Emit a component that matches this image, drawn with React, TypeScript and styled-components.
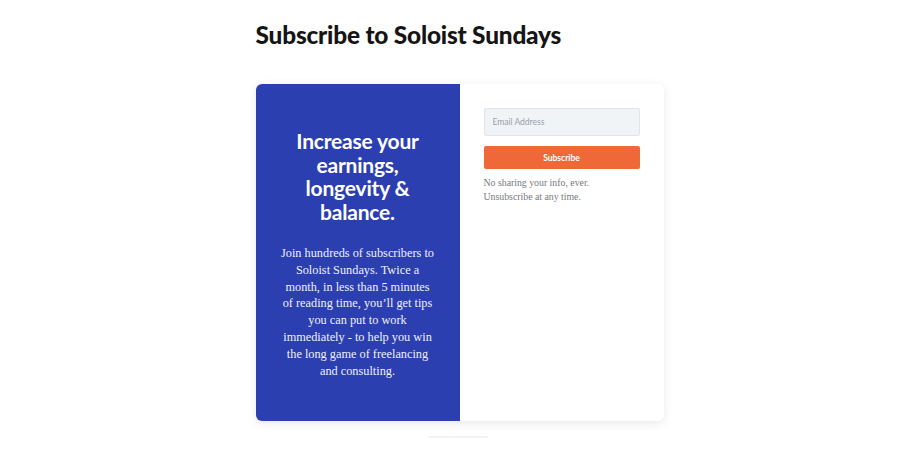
import styled, { createGlobalStyle } from 'styled-components'

const GlobalStyle = createGlobalStyle`
  body {
    margin: 0;
    background: #ffffff;
    font-family: 'Lato', 'Liberation Sans', sans-serif;
  }
`

const Page = styled.div`
  width: 408px;
  margin: 0 auto;
  padding-top: 20px;
  transform: translateX(-2px);
`

const Title = styled.h1`
  margin: 0 0 34px;
  font-family: 'Lato', sans-serif;
  font-weight: 900;
  font-size: 24.4px;
  line-height: 30px;
  color: #151515;
  letter-spacing: -0.2px;
`

const Card = styled.div`
  display: grid;
  grid-template-columns: 204px 1fr;
  height: 337px;
  border-radius: 6px;
  background: #ffffff;
  box-shadow: 0 2px 10px rgba(30, 40, 60, 0.1);
  overflow: hidden;
`

const Promo = styled.div`
  background: #2c3fb1;
  color: #ffffff;
  text-align: center;
  padding: 45px 24px 0;
`

const PromoHeading = styled.h2`
  margin: 0 0 22px;
  padding: 0 8px;
  font-family: 'Lato', sans-serif;
  font-weight: 700;
  font-size: 21px;
  line-height: 23.5px;
  letter-spacing: -0.2px;
`

const PromoText = styled.p`
  margin: 0;
  font-family: 'Liberation Serif', serif;
  font-size: 12.3px;
  line-height: 16.8px;
  color: #eef0fa;
`

const Form = styled.div`
  display: flex;
  flex-direction: column;
  padding: 24px 24px 0;
`

const EmailInput = styled.input`
  box-sizing: border-box;
  height: 28px;
  width: 100%;
  padding: 0 8px;
  border: 1px solid #e1e5eb;
  border-radius: 2px;
  background: #f1f4f7;
  font-family: 'Lato', sans-serif;
  font-size: 8.5px;
  color: #333;
  outline: none;

  &::placeholder {
    color: #9aa0a8;
  }
`

const SubmitButton = styled.button`
  margin-top: 10px;
  height: 23px;
  border: none;
  border-radius: 2px;
  background: #ee6838;
  color: #ffffff;
  font-family: 'Lato', sans-serif;
  font-weight: 700;
  font-size: 8.5px;
  cursor: pointer;
`

const Disclaimer = styled.p`
  margin: 7px 0 0;
  font-family: 'Liberation Serif', serif;
  font-size: 9.8px;
  line-height: 14px;
  color: #757a80;
`

const Footer = styled.div`
  display: flex;
  justify-content: center;
  padding-top: 15px;
`

const Badge = styled.div`
  width: 60px;
  height: 2px;
  border-radius: 1px;
  background: #f2f3f4;
  transform: translateX(-2px);
`

export default function App() {
  return (
    <>
      <GlobalStyle />
      <Page>
        <Title>Subscribe to Soloist Sundays</Title>
        <Card>
          <Promo>
            <PromoHeading>
              Increase your earnings, longevity &amp; balance.
            </PromoHeading>
            <PromoText>
              Join hundreds of subscribers to Soloist Sundays. Twice a month, in less than 5
              minutes of reading time, you’ll get tips you can put to work immediately - to help
              you win the long game of freelancing and consulting.
            </PromoText>
          </Promo>
          <Form>
            <EmailInput type="email" placeholder="Email Address" />
            <SubmitButton>Subscribe</SubmitButton>
            <Disclaimer>
              No sharing your info, ever.
              <br />
              Unsubscribe at any time.
            </Disclaimer>
          </Form>
        </Card>
        <Footer>
          <Badge />
        </Footer>
      </Page>
    </>
  )
}
